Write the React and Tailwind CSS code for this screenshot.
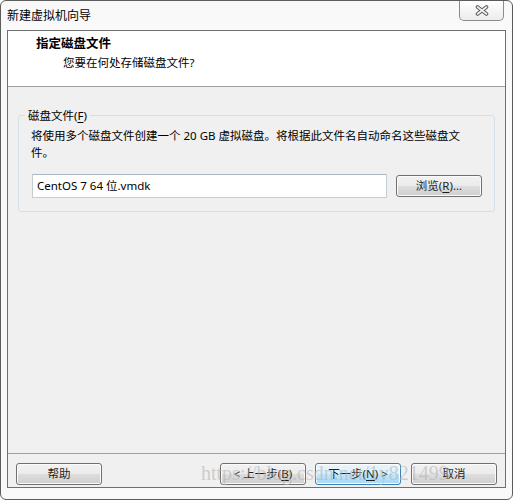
import React from 'react';

const font = "font-['Noto_Sans','Noto_Sans_CJK_SC',sans-serif]";

const Key = ({ children }) => <span className="underline underline-offset-2">{children}</span>;

const WinButton = ({ children, primary = false, className = '' }) => (
    <button
        className={
            'h-[22px] w-[86px] rounded-[3px] border text-[11.5px] leading-none text-[#1e1e1e] flex items-center justify-center ' +
            (primary
                ? 'border-[#3c7fb1] bg-[linear-gradient(to_bottom,#eaf6fd_0%,#d9f0fc_50%,#bee6fd_51%,#a7d9f5_100%)] shadow-[inset_0_0_0_1px_#fff]'
                : 'border-[#707070] bg-[linear-gradient(to_bottom,#f2f2f2_0%,#ebebeb_50%,#dddddd_51%,#cfcfcf_100%)] shadow-[inset_0_0_0_1px_#fbfbfb]') +
            ' ' + className
        }
    >
        {children}
    </button>
);

const App = () => {
    return (
        <div className={`relative w-[513px] h-[500px] ${font} bg-[#f9f9f9] border border-[#5c5c5c] rounded-[6px] flex flex-col overflow-hidden`}>
            {/* Title bar */}
            <div className="h-[29px] flex items-center pl-[6px] text-[12px] text-black">
                新建虚拟机向导
            </div>
            <div className="absolute top-0 right-[8px] w-[45px] h-[20px] border border-t-0 border-[#8b8b8b] rounded-b-[5px] bg-[linear-gradient(to_bottom,#ffffff,#ececec)] flex items-center justify-center">
                <svg width="14" height="11" viewBox="0 0 14 11">
                    <path d="M2.5 2 L11.5 9 M11.5 2 L2.5 9" stroke="#5a5a5a" strokeWidth="3.6" strokeLinecap="round" fill="none" />
                    <path d="M2.5 2 L11.5 9 M11.5 2 L2.5 9" stroke="#f4f4f4" strokeWidth="1.6" strokeLinecap="round" fill="none" />
                </svg>
            </div>

            {/* Client area */}
            <div className="flex-1 mx-[6px] mb-[11px] border border-[#6f6f6f] flex flex-col bg-[#f0f0f0]">
                {/* Header */}
                <div className="h-[56px] bg-white border-b border-[#a0a0a0] pl-[28px] pt-[5px]">
                    <div className="text-[12.5px] font-bold leading-[16px] text-black">指定磁盘文件</div>
                    <div className="mt-[3px] pl-[27px] text-[11.5px] leading-[16px] text-black">您要在何处存储磁盘文件?</div>
                </div>

                {/* Body */}
                <div className="flex-1 px-[10px] pt-[28px]">
                    <div className="relative border border-[#d5dfe5] rounded-[3px] pl-[12px] pr-[10px] pt-[11px] pb-[13px]">
                        <span className="absolute -top-[9px] left-[6px] px-[3px] bg-[#f0f0f0] text-[11.5px] leading-[17px] text-black">
                            磁盘文件(<Key>F</Key>)
                        </span>
                        <p className="text-[11.5px] leading-[17px] text-black">
                            将使用多个磁盘文件创建一个 20 GB 虚拟磁盘。将根据此文件名自动命名这些磁盘文
                            <br />
                            件。
                        </p>
                        <div className="mt-[13px] flex items-center gap-[9px] pl-[1px]">
                            <div className="w-[355px] h-[24px] bg-white border border-[#c3cdd8] border-t-[#abb6c3] flex items-center pl-[4px] text-[11.5px] text-black">
                                CentOS 7 64 位.vmdk
                            </div>
                            <WinButton className="w-[85px]">
                                浏览(<Key>R</Key>)...
                            </WinButton>
                        </div>
                    </div>
                </div>

                {/* Footer */}
                <div className="h-[34px] border-t border-[#a0a0a0] flex items-start pt-[9px] px-[8px]">
                    <WinButton>帮助</WinButton>
                    <div className="ml-auto flex gap-[9px]">
                        <WinButton>&lt; 上一步(<Key>B</Key>)</WinButton>
                        <WinButton primary>下一步(<Key>N</Key>) &gt;</WinButton>
                        <WinButton className="ml-[1px]">取消</WinButton>
                    </div>
                </div>
            </div>

            {/* Watermark */}
            <div className="absolute left-[200px] top-[460px] pointer-events-none font-['Liberation_Serif',serif] text-[20px] leading-[24px] text-[#b4b4b4]/60 whitespace-nowrap">
                https://blog.csdn.net/1y821499
            </div>
        </div>
    );
};

export default App;
